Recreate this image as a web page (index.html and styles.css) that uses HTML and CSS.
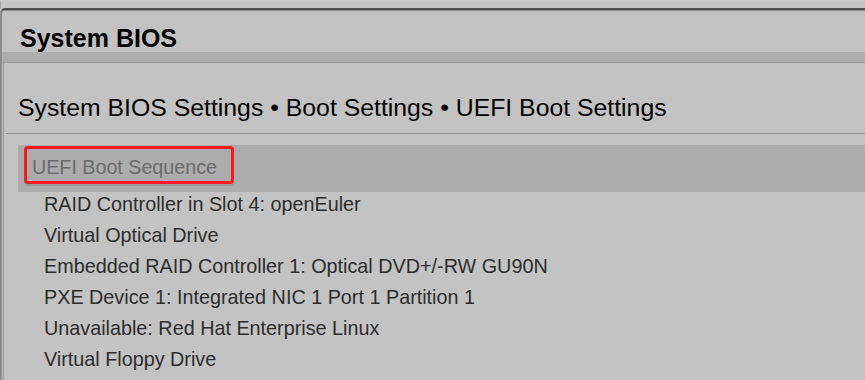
FILE: index.html
```html
<!DOCTYPE html>
<html lang="en">
<head>
    <meta charset="UTF-8">
    <meta name="viewport" content="width=device-width, initial-scale=1.0">
    <title>System BIOS</title>
    <link rel="stylesheet" href="styles.css">
</head>
<body>

<div class="top-strip"></div>

<div class="window">
    <div class="window-title">System BIOS</div>
    <div class="title-bar"></div>

    <div class="window-body">
        <div class="breadcrumb">System BIOS Settings &bull; Boot Settings &bull; UEFI Boot Settings</div>

        <div class="group-row">
            <div class="group-label">UEFI Boot Sequence</div>
        </div>

        <ul class="boot-list">
            <li>RAID Controller in Slot 4: openEuler</li>
            <li>Virtual Optical Drive</li>
            <li>Embedded RAID Controller 1: Optical DVD+/-RW GU90N</li>
            <li>PXE Device 1: Integrated NIC 1 Port 1 Partition 1</li>
            <li>Unavailable: Red Hat Enterprise Linux</li>
            <li>Virtual Floppy Drive</li>
        </ul>
    </div>
</div>

</body>
</html>
```

FILE: styles.css
```css
/* General */
body {
    margin: 0;
    background-color: #c3c3c3;
    font-family: "Liberation Sans", Arial, sans-serif;
    color: #000;
    overflow: hidden;
}

.top-strip {
    height: 8px;
    background-color: #c6c6c6;
    border-top: 2px solid #cbcbcb;
    box-sizing: border-box;
    border-left: 1px solid #a8a8a8;
}

.window {
    border-top: 2px solid #4f4f4f;
    border-left: 2px solid #8c8c8c;
    border-top-left-radius: 5px;
    box-shadow: inset 0 1px 0 #8a8a8a;
}

/* Title */
.window-title {
    height: 42px;
    box-sizing: border-box;
    padding: 14px 0 0 18px;
    font-size: 25px;
    font-weight: bold;
    line-height: 28px;
}

.title-bar {
    height: 10px;
    background-color: #adadad;
    border-bottom: 1px solid #999;
}

/* Body */
.window-body {
    margin-left: 1px;
    border-left: 1px solid #9a9a9a;
    height: 320px;
}

.breadcrumb {
    margin-left: 2px;
    padding: 30px 0 10px 12px;
    font-size: 24.8px;
    line-height: 30px;
    border-bottom: 1px solid #8e8e8e;
    white-space: nowrap;
}

.group-row {
    margin: 11px 0 0 14px;
    height: 47px;
    background-color: #acacac;
}

.group-label {
    display: inline-block;
    margin: 1px 0 0 6px;
    width: 199px;
    height: 28px;
    border: 3px solid #fa1a1a;
    border-radius: 4px;
    padding: 4px 0 0 5px;
    font-size: 19.7px;
    line-height: 28px;
    color: #6b6b6b;
    box-shadow: 0 2px 0 #9c9c9c;
}

.boot-list {
    list-style: none;
    margin: 0;
    padding: 1px 0 0 40px;
}

.boot-list li {
    height: 31px;
    font-size: 19.8px;
    line-height: 22px;
    color: #2d2d2d;
    white-space: nowrap;
}
```
